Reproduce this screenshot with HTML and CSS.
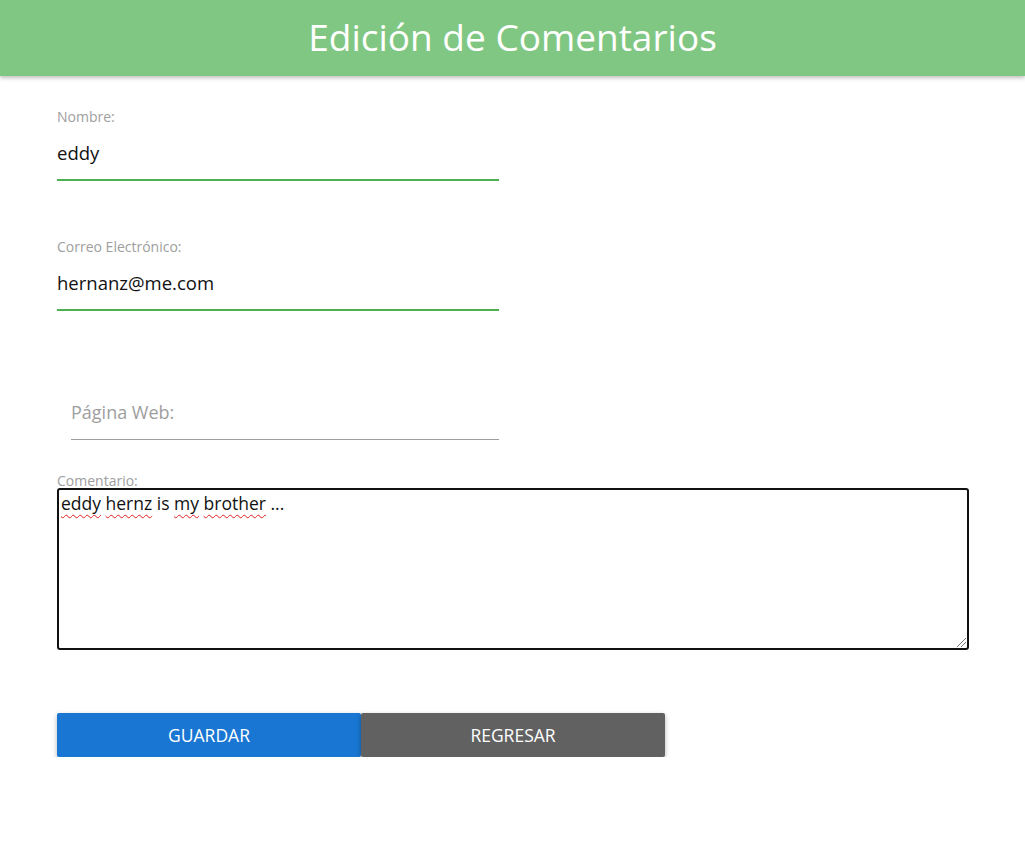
FILE: index.html
```html
<!DOCTYPE html>
<html lang="es">
<head>
<meta charset="utf-8">
<title>Edición de Comentarios</title>
<link rel="stylesheet" href="styles.css">
</head>
<body>
<header class="topbar"><h1 class="title">Edición de Comentarios</h1></header>
<main class="form">
  <div class="field">
    <label class="label">Nombre:</label>
    <div class="input active">eddy</div>
  </div>
  <div class="field">
    <label class="label">Correo Electrónico:</label>
    <div class="input active">hernanz@me.com</div>
  </div>
  <div class="field web">
    <div class="input empty">Página Web:</div>
  </div>
  <div class="field comment">
    <label class="label">Comentario:</label>
    <div class="textarea"><span class="sp">eddy</span> <span class="sp">hernz</span> is <span class="sp">my</span> <span class="sp">brother</span> ...<span class="grip"></span></div>
  </div>
  <div class="buttons">
    <button class="btn save">GUARDAR</button>
    <button class="btn back">REGRESAR</button>
  </div>
</main>
</body>
</html>
```
FILE: styles.css
```css
html, body { margin: 0; padding: 0; background: #fff; }
body { font-family: "Open Sans", "Noto Sans", sans-serif; color: #111; }
.topbar {
  height: 76px;
  background: #81c784;
  display: flex;
  align-items: center;
  justify-content: center;
  box-shadow: 0 2px 4px rgba(0,0,0,0.25);
}
.title {
  margin: 0 0 3px 0;
  color: #fff;
  font-weight: 400;
  font-size: 37px;
}
.form { padding: 33px 56px 0 57px; }
.field { width: 442px; }
.label {
  display: block;
  font-size: 14px;
  color: #9e9e9e;
  line-height: 16px;
}
.input {
  box-sizing: border-box;
  height: 46px;
  line-height: 36px;
  font-size: 18.5px;
  margin-top: 10px;
  border-bottom: 2px solid #4caf50;
}
.field + .field { margin-top: 58px; }
.field.web { margin-top: 82px; padding-left: 14px; width: 428px; }
.input.empty {
  color: #9e9e9e;
  font-size: 18px;
  margin-top: 0;
  border-bottom: 1px solid #9e9e9e;
  height: 47px;
  line-height: 38px;
}
.field.comment { width: 912px; margin-top: 34px; }
.comment .label { line-height: 14px; }
.textarea {
  position: relative;
  box-sizing: border-box;
  height: 162px;
  border: 2px solid #111;
  border-radius: 3px;
  padding: 2px 2px;
  font-size: 17.5px;
  line-height: 22px;
}
.sp {
  text-decoration-line: underline;
  text-decoration-style: wavy;
  text-decoration-color: #e02020;
  text-decoration-thickness: 1.2px;
  text-underline-offset: 4px;
  text-decoration-skip-ink: none;
}
.grip {
  position: absolute;
  right: 1px;
  bottom: 1px;
  width: 9px;
  height: 9px;
  background: linear-gradient(135deg, transparent 45%, #777 45%, #777 52%, transparent 52%, transparent 70%, #777 70%, #777 77%, transparent 77%);
}
.buttons { display: flex; margin-top: 63px; }
.btn {
  width: 304px;
  height: 44px;
  border: none;
  border-radius: 2px;
  color: #fff;
  font-family: inherit;
  font-size: 17.5px;
  box-shadow: 0 2px 5px rgba(0,0,0,0.3);
}
.save { background: #1976d2; }
.back { background: #616161; }
```
